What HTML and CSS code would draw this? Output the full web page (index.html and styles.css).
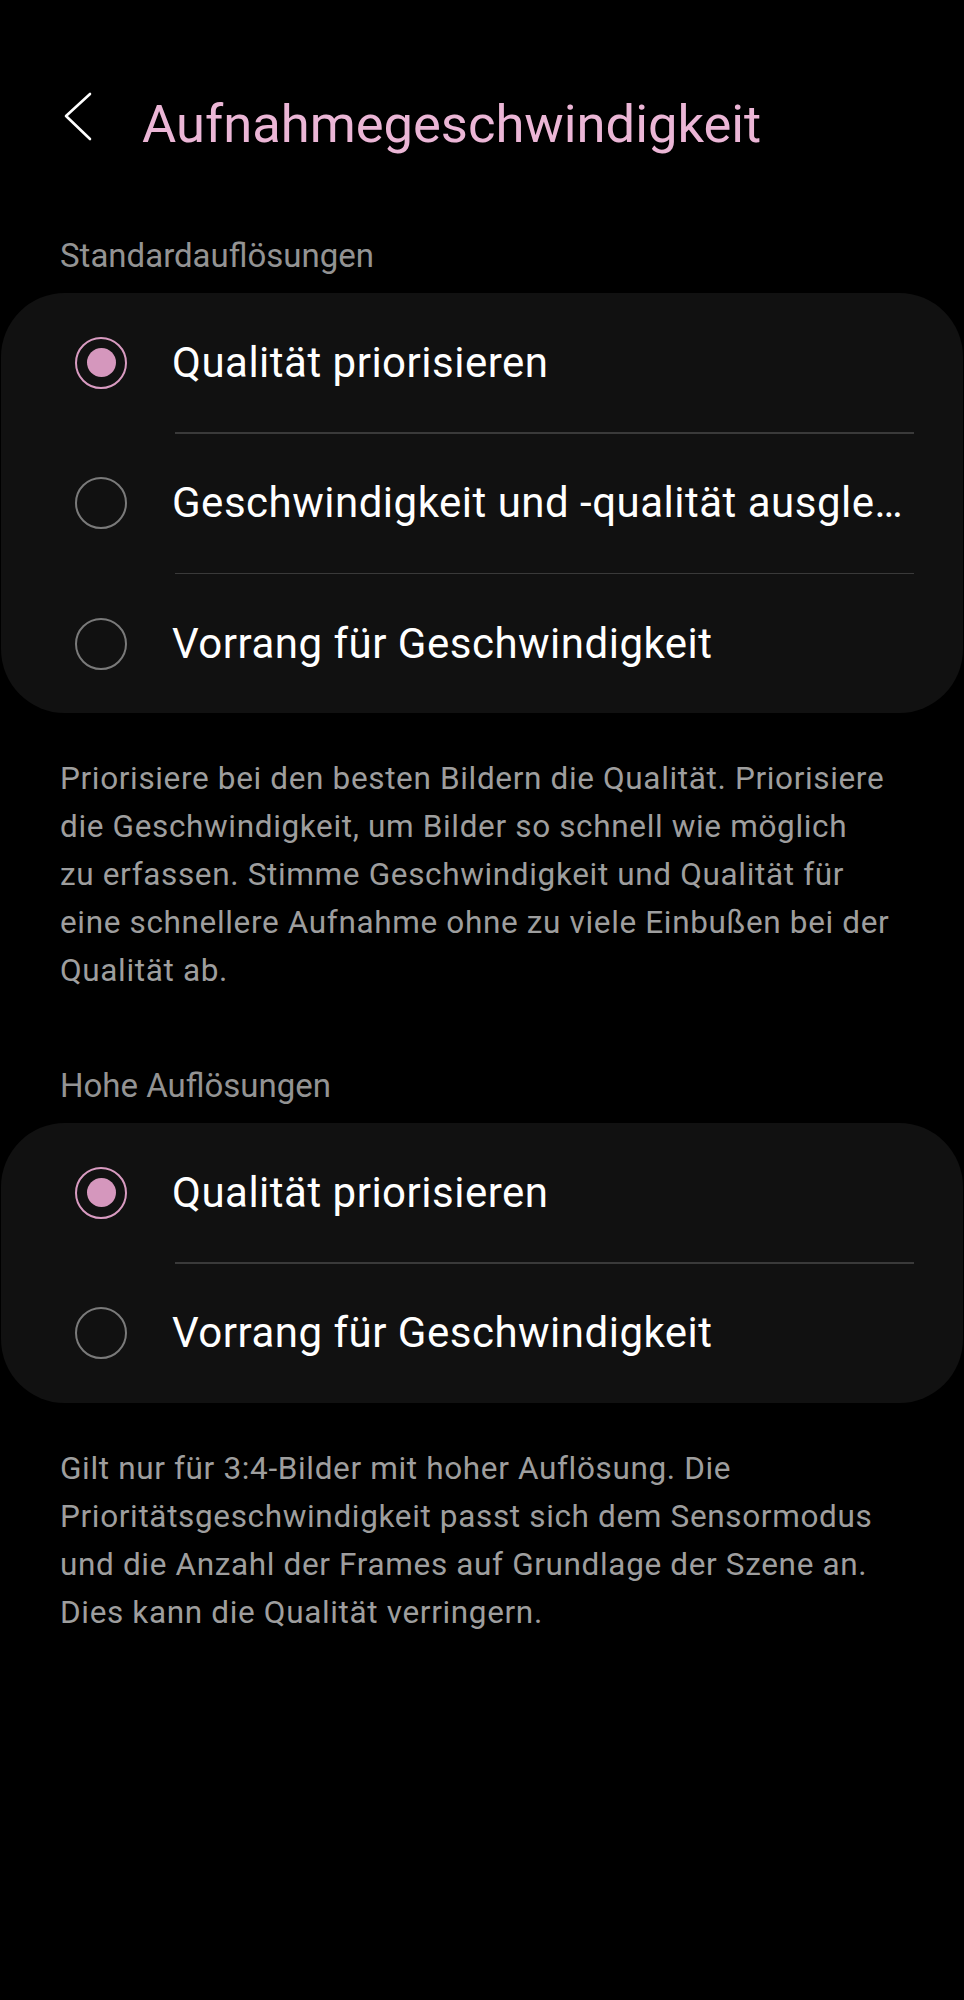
FILE: index.html
```html
<!DOCTYPE html>
<html lang="de">
<head>
<meta charset="utf-8">
<title>Aufnahmegeschwindigkeit</title>
<link rel="stylesheet" href="styles.css">
</head>
<body>
<header class="appbar">
  <svg class="back" width="30" height="64" viewBox="0 0 30 64" aria-hidden="true">
    <path d="M27 6 L3 28 L27 51" fill="none" stroke="#ffffff" stroke-width="2.6" stroke-linecap="round" stroke-linejoin="round"/>
  </svg>
  <h1 class="title">Aufnahmegeschwindigkeit</h1>
</header>

<main>
  <h2 class="section-label">Standardauflösungen</h2>
  <div class="card">
    <div class="option">
      <span class="radio checked"></span>
      <span class="option-text">Qualität priorisieren</span>
    </div>
    <div class="sep"></div>
    <div class="option">
      <span class="radio"></span>
      <span class="option-text">Geschwindigkeit und -qualität ausgleichen</span>
    </div>
    <div class="sep"></div>
    <div class="option">
      <span class="radio"></span>
      <span class="option-text">Vorrang für Geschwindigkeit</span>
    </div>
  </div>
  <p class="desc">Priorisiere bei den besten Bildern die Qualität. Priorisiere<br>die Geschwindigkeit, um Bilder so schnell wie möglich<br>zu erfassen. Stimme Geschwindigkeit und Qualität für<br>eine schnellere Aufnahme ohne zu viele Einbußen bei der<br>Qualität ab.</p>

  <h2 class="section-label second">Hohe Auflösungen</h2>
  <div class="card">
    <div class="option">
      <span class="radio checked"></span>
      <span class="option-text">Qualität priorisieren</span>
    </div>
    <div class="sep"></div>
    <div class="option">
      <span class="radio"></span>
      <span class="option-text">Vorrang für Geschwindigkeit</span>
    </div>
  </div>
  <p class="desc">Gilt nur für 3:4-Bilder mit hoher Auflösung. Die<br>Prioritätsgeschwindigkeit passt sich dem Sensormodus<br>und die Anzahl der Frames auf Grundlage der Szene an.<br>Dies kann die Qualität verringern.</p>
</main>
</body>
</html>
```

FILE: styles.css
```css
html, body {
  margin: 0;
  padding: 0;
  background: #000000;
}

body {
  font-family: Roboto, "Liberation Sans", sans-serif;
  color: #ffffff;
  width: 964px;
}

.appbar {
  display: flex;
  align-items: center;
  height: 64px;
  margin-top: 92px;
}

.back {
  flex: none;
  margin-left: 63px;
  margin-top: -8px;
}

.title {
  margin: 0 0 0 49px;
  font-size: 52.5px;
  line-height: 64px;
  font-weight: 400;
  color: #ebb6d6;
}

.section-label {
  margin: 80px 0 17px 0;
  padding-left: 60px;
  font-size: 33px;
  line-height: 40px;
  font-weight: 400;
  color: #939393;
}

.section-label.second {
  margin-top: 71px;
}

.card {
  margin: 0 1px;
  background: #111111;
  border-radius: 64px;
}

.option {
  display: flex;
  align-items: center;
  height: 139px;
}

.radio {
  flex: none;
  box-sizing: border-box;
  width: 52px;
  height: 52px;
  margin-left: 74px;
  border: 2px solid #7a7a7a;
  border-radius: 50%;
  display: flex;
  align-items: center;
  justify-content: center;
}

.radio.checked {
  border-color: #d99bc1;
}

.radio.checked::after {
  content: "";
  width: 29px;
  height: 29px;
  border-radius: 50%;
  background: #d597bd;
}

.option-text {
  margin-left: 45px;
  margin-right: 60px;
  font-size: 42px;
  line-height: 50px;
  letter-spacing: 0.5px;
  white-space: nowrap;
  overflow: hidden;
  text-overflow: ellipsis;
  min-width: 0;
}

.sep {
  height: 1.5px;
  margin: 0 49px 0 174px;
  background: #3a3a3a;
}

.desc {
  margin: 42px 0 0 0;
  padding: 0 10px 0 60px;
  font-size: 31.5px;
  line-height: 48px;
  letter-spacing: 0.65px;
  color: #9e9e9e;
}
```
